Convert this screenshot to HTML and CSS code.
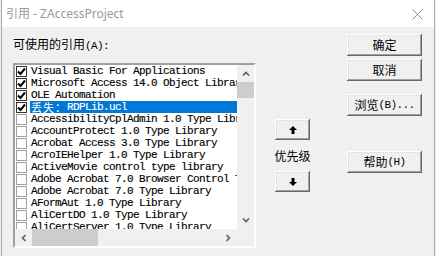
FILE: index.html
```
<!DOCTYPE HTML>
<html>

<head>
    <meta charset="utf-8">
    <link rel="stylesheet" href="styles.css">
</head>

<body>
    <div class="window">
        <div class="titlebar">
            <span class="title">引用 - ZAccessProject</span>
            <svg class="close" width="11" height="11" viewBox="0 0 11 11">
                <path d="M0.5 0.5 L10.5 10.5 M10.5 0.5 L0.5 10.5" stroke="#8c8c8c" stroke-width="1" fill="none" />
            </svg>
        </div>

        <div class="content">
            <div class="refs">
                <div class="label">可使用的引用<span class="half">(A):</span></div>

                <div class="listbox">
                    <div class="items">
                        <div class="item"><span class="check on"><svg width="9" height="9" viewBox="0 0 9 9"><path d="M1 4.5 L3.5 7 L8 1.5" stroke="#000" stroke-width="2" fill="none" /></svg></span><span class="name">Visual Basic For Applications</span></div>
                        <div class="item"><span class="check on"><svg width="9" height="9" viewBox="0 0 9 9"><path d="M1 4.5 L3.5 7 L8 1.5" stroke="#000" stroke-width="2" fill="none" /></svg></span><span class="name">Microsoft Access 14.0 Object Library</span></div>
                        <div class="item"><span class="check on"><svg width="9" height="9" viewBox="0 0 9 9"><path d="M1 4.5 L3.5 7 L8 1.5" stroke="#000" stroke-width="2" fill="none" /></svg></span><span class="name">OLE Automation</span></div>
                        <div class="item selected"><span class="check on"><svg width="9" height="9" viewBox="0 0 9 9"><path d="M1 4.5 L3.5 7 L8 1.5" stroke="#000" stroke-width="2" fill="none" /></svg></span><span class="name"><span class="cjk">丢失：</span>RDPLib.ucl</span></div>
                        <div class="item"><span class="check"></span><span class="name">AccessibilityCplAdmin 1.0 Type Library</span></div>
                        <div class="item"><span class="check"></span><span class="name">AccountProtect 1.0 Type Library</span></div>
                        <div class="item"><span class="check"></span><span class="name">Acrobat Access 3.0 Type Library</span></div>
                        <div class="item"><span class="check"></span><span class="name">AcroIEHelper 1.0 Type Library</span></div>
                        <div class="item"><span class="check"></span><span class="name">ActiveMovie control type library</span></div>
                        <div class="item"><span class="check"></span><span class="name">Adobe Acrobat 7.0 Browser Control Type Library</span></div>
                        <div class="item"><span class="check"></span><span class="name">Adobe Acrobat 7.0 Type Library</span></div>
                        <div class="item"><span class="check"></span><span class="name">AFormAut 1.0 Type Library</span></div>
                        <div class="item"><span class="check"></span><span class="name">AliCertDO 1.0 Type Library</span></div>
                        <div class="item"><span class="check"></span><span class="name">AliCertServer 1.0 Type Library</span></div>
                    </div>

                    <div class="vscroll">
                        <div class="sbtn">
                            <svg width="8" height="5" viewBox="0 0 8 5"><path d="M1 4.5 L4 1.5 L7 4.5" stroke="#606060" stroke-width="1.6" fill="none" /></svg>
                        </div>
                        <div class="vthumb"></div>
                        <div class="track"></div>
                        <div class="sbtn">
                            <svg width="8" height="5" viewBox="0 0 8 5"><path d="M1 0.5 L4 3.5 L7 0.5" stroke="#606060" stroke-width="1.6" fill="none" /></svg>
                        </div>
                    </div>

                    <div class="hscroll">
                        <div class="sbtn">
                            <svg width="5" height="8" viewBox="0 0 5 8"><path d="M4.5 1 L1.5 4 L4.5 7" stroke="#606060" stroke-width="1.6" fill="none" /></svg>
                        </div>
                        <div class="hthumb"></div>
                        <div class="track"></div>
                        <div class="sbtn">
                            <svg width="5" height="8" viewBox="0 0 5 8"><path d="M0.5 1 L3.5 4 L0.5 7" stroke="#606060" stroke-width="1.6" fill="none" /></svg>
                        </div>
                    </div>

                    <div class="corner"></div>
                </div>
            </div>

            <div class="priority">
                <div class="btn arrow">
                    <svg width="8" height="8" viewBox="0 0 8 8"><polygon points="4,0 8,4 5.5,4 5.5,8 2.5,8 2.5,4 0,4" fill="#000" /></svg>
                </div>
                <div class="prio-label">优先级</div>
                <div class="btn arrow">
                    <svg width="8" height="8" viewBox="0 0 8 8"><polygon points="4,8 8,4 5.5,4 5.5,0 2.5,0 2.5,4 0,4" fill="#000" /></svg>
                </div>
            </div>

            <div class="actions">
                <div class="btn ok">确定</div>
                <div class="btn cancel">取消</div>
                <div class="btn browse">浏览<span class="half">(B)...</span></div>
                <div class="btn help">帮助<span class="half">(H)</span></div>
            </div>
        </div>
    </div>
</body>

</html>
```

FILE: styles.css
```
html {
    background-color: #f0f0f0;
}

body {
    margin: 0;
    width: 436px;
    height: 256px;
    overflow: hidden;
    font-family: "Noto Sans CJK SC", sans-serif;
    font-size: 12px;
    color: #000;
}

.window {
    margin-left: 1px;
    width: 432px;
    height: 256px;
    border-left: 1px solid #aaaaaa;
    border-right: 1px solid #aaaaaa;
    background-color: #f0f0f0;
}

.titlebar {
    display: flex;
    align-items: center;
    justify-content: space-between;
    height: 27px;
    padding: 0 11px 0 4px;
    background-color: #ffffff;
}

.title {
    font-family: "Noto Sans", "Noto Sans CJK SC", sans-serif;
    font-size: 12px;
    line-height: 14px;
    color: #999999;
    margin-top: 1px;
}

.close {
    display: block;
    margin-top: 1px;
}

.content {
    display: flex;
    align-items: flex-start;
    padding: 0 12px 0 11px;
}

.half {
    font-family: "Liberation Mono", monospace;
    font-size: 11px;
    letter-spacing: -0.6px;
}

/* references list */

.refs {
    width: 243px;
    padding-top: 11px;
}

.label {
    line-height: 12px;
    height: 12px;
}

.listbox {
    display: grid;
    grid-template-columns: 222px 17px;
    grid-template-rows: 164px 17px;
    margin-top: 13px;
    border-style: solid;
    border-width: 2px;
    border-color: #a0a0a0 #ffffff #ffffff #a0a0a0;
    box-shadow: inset 1px 1px 0 #696969, inset -1px -1px 0 #e3e3e3;
    background-color: #ffffff;
}

.items {
    overflow: hidden;
    background-color: #ffffff;
}

.item {
    display: flex;
    align-items: center;
    height: 12px;
    font-family: "Liberation Mono", monospace;
    font-size: 11px;
    letter-spacing: -0.6px;
    line-height: 12px;
    white-space: nowrap;
    -webkit-text-stroke: 0.15px #000;
}

.check {
    flex: none;
    display: flex;
    align-items: center;
    justify-content: center;
    width: 9px;
    height: 9px;
    margin-left: 1px;
    border: 1px solid #a0a0a0;
    background-color: #ffffff;
}

.check.on {
    border-color: #333333;
}

.check svg {
    display: block;
}

.name {
    flex: 1 0 auto;
    margin-left: 3px;
    padding-left: 1px;
    height: 12px;
}

.selected .name {
    background-color: #0078d7;
    color: #ffffff;
    -webkit-text-stroke: 0.15px #ffffff;
}

.cjk {
    display: inline-block;
    vertical-align: top;
    height: 12px;
    overflow: hidden;
    font-family: "Noto Sans CJK SC", sans-serif;
    font-size: 11px;
    line-height: 12px;
    letter-spacing: 1px;
    -webkit-text-stroke: 0;
}

/* scroll bars */

.vscroll {
    display: flex;
    flex-direction: column;
    background-color: #f0f0f0;
}

.hscroll {
    display: flex;
    background-color: #f0f0f0;
}

.sbtn {
    flex: none;
    display: flex;
    align-items: center;
    justify-content: center;
    width: 17px;
    height: 17px;
}

.sbtn svg {
    display: block;
}

.track {
    flex: 1;
}

.vthumb {
    height: 16px;
    background-color: #cdcdcd;
}

.hthumb {
    width: 66px;
    background-color: #cdcdcd;
}

.corner {
    background-color: #f0f0f0;
}

/* buttons */

.btn {
    display: flex;
    align-items: center;
    justify-content: center;
    height: 22px;
    line-height: 12px;
    background-color: #f0f0f0;
    box-shadow: inset -1px -1px 0 #696969, inset 1px 1px 0 #ffffff, inset -2px -2px 0 #a0a0a0, inset 2px 2px 0 #e3e3e3;
}

.priority {
    width: 35px;
    margin-left: 19px;
    padding-top: 92px;
}

.arrow {
    height: 21px;
}

.arrow svg {
    display: block;
}

.prio-label {
    margin: 10px -2px 9px -2px;
    line-height: 12px;
    text-align: center;
}

.actions {
    width: 75px;
    margin-left: 37px;
    padding-top: 7px;
}

.cancel {
    margin-top: 3px;
}

.browse {
    margin-top: 13px;
}

.help {
    margin-top: 35px;
}
```
